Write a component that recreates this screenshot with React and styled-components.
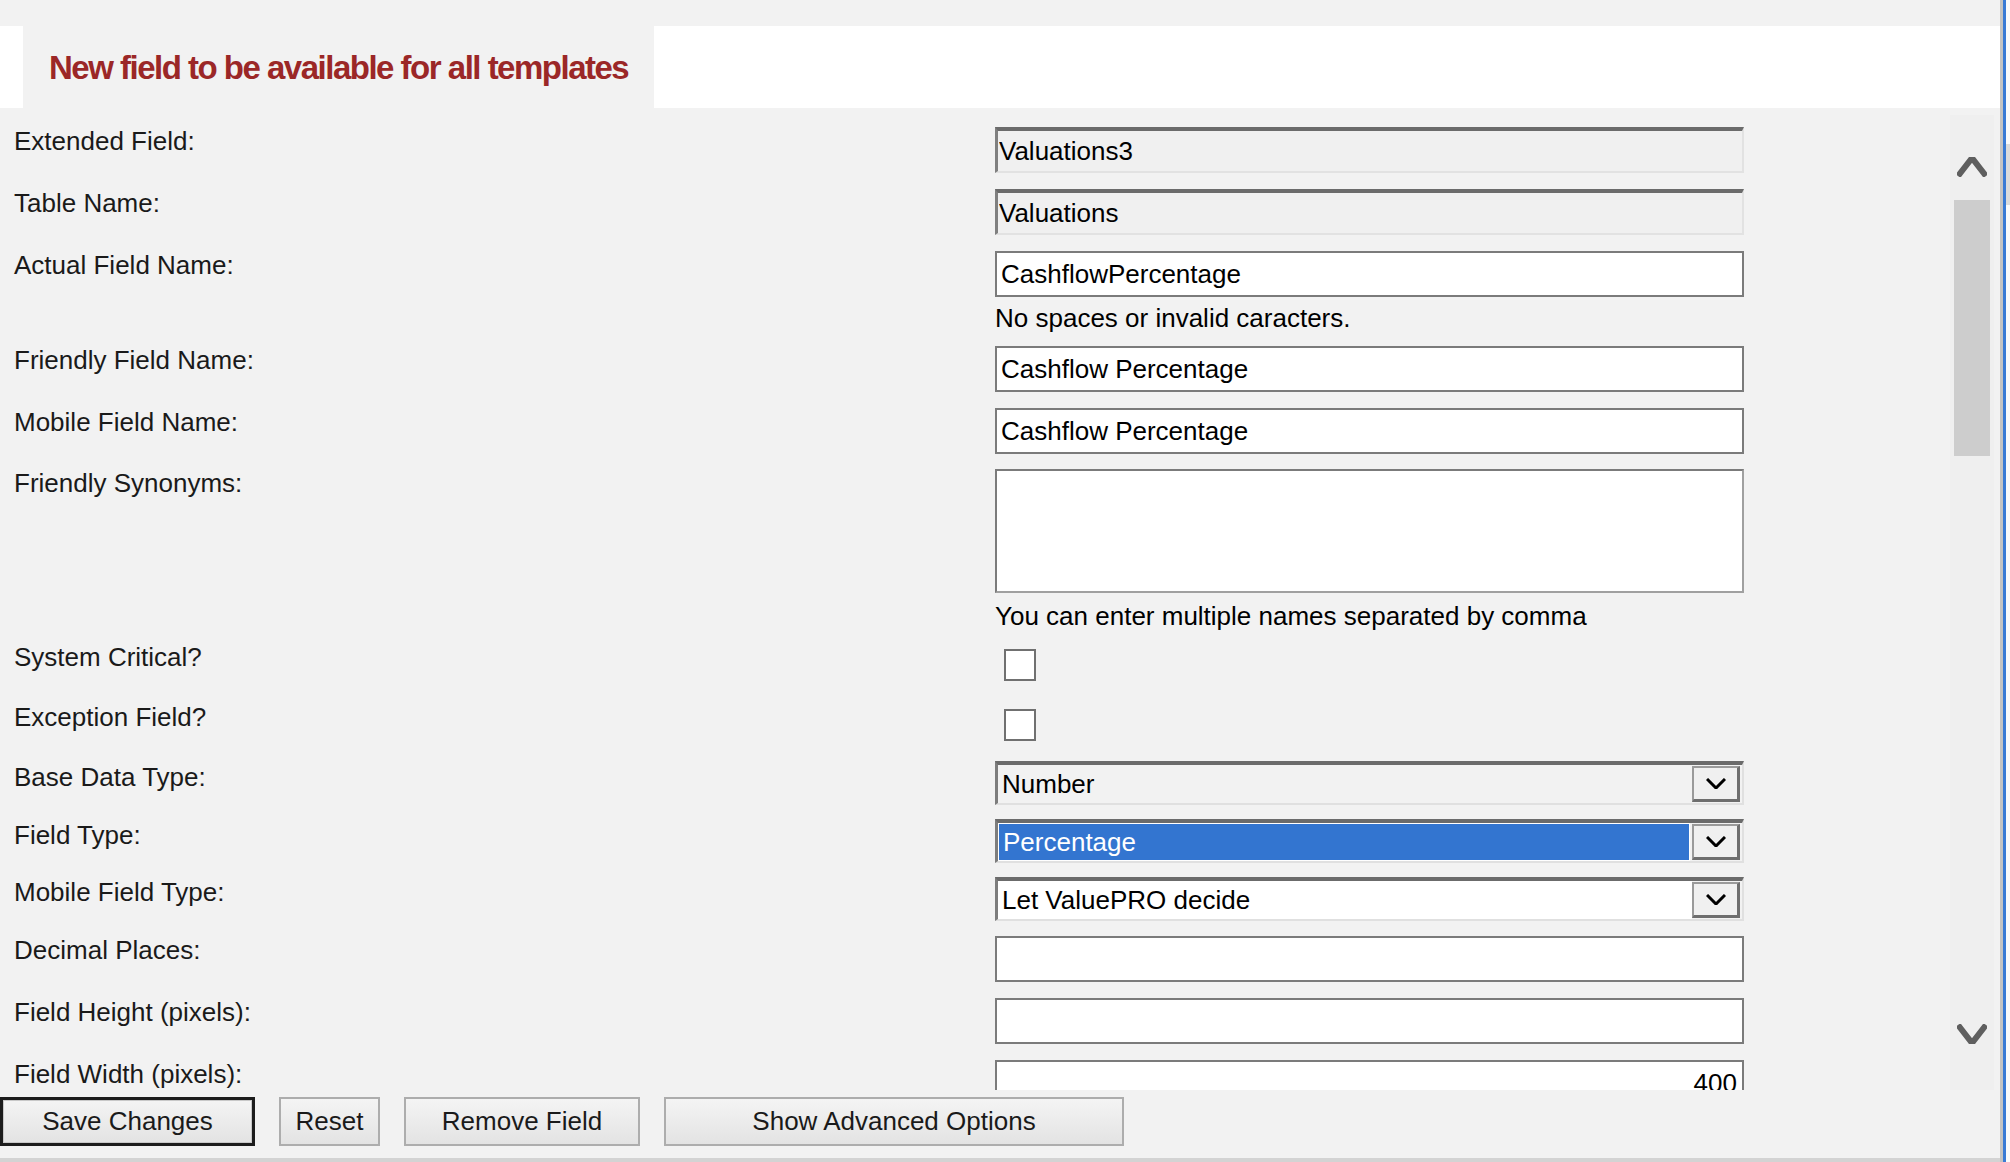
import React from "react";
import styled, { createGlobalStyle, css } from "styled-components";

const GlobalStyle = createGlobalStyle`
  html, body {
    margin: 0;
    padding: 0;
    background: #f2f2f2;
  }
  body {
    width: 2010px;
    height: 1162px;
    overflow: hidden;
    font-family: "Liberation Sans", Arial, sans-serif;
  }
`;

const Screen = styled.div`
  display: flex;
  width: 2010px;
  height: 1162px;
`;

const Window = styled.div`
  width: 2000px;
  display: flex;
  flex-direction: column;
  background: #f2f2f2;
`;

const EdgeGray = styled.div`
  width: 3px;
  background: #c4c4c4;
`;

const EdgeBlue = styled.div`
  width: 3px;
  background: #3a7bd5;
`;

const Behind = styled.div`
  flex: 1;
  background: #fbfbfb;
  padding-top: 144px;
`;

const BehindBlock = styled.div`
  height: 61px;
  background: #dcdcdc;
`;

const Header = styled.div`
  margin-top: 26px;
  height: 82px;
  background: #fff;
  display: flex;
  padding-left: 23px;
`;

const Tab = styled.div`
  width: 631px;
  box-sizing: border-box;
  padding-left: 26px;
  padding-top: 2px;
  background: #f2f2f2;
  display: flex;
  align-items: center;
  color: #9b2727;
  font-family: "Liberation Sans Narrow", "Liberation Sans", Arial, sans-serif;
  font-weight: bold;
  font-size: 33px;
  letter-spacing: -1.5px;
  white-space: nowrap;
`;

const Body = styled.div`
  display: flex;
  height: 982px;
`;

const Form = styled.div`
  flex: 1;
  overflow: hidden;
  padding-top: 19px;
  box-sizing: border-box;
`;

const Row = styled.div`
  display: grid;
  grid-template-columns: 981px 749px;
  padding-left: 14px;
  margin-bottom: ${(p) => p.$gap ?? 16}px;
`;

const Label = styled.div`
  font-size: 26px;
  line-height: 28px;
  color: #1a1a1a;
  padding-top: ${(p) => p.$pt || 0}px;
  white-space: nowrap;
`;

const Control = styled.div`
  display: flex;
  flex-direction: column;
`;

const Hint = styled.div`
  font-size: 26px;
  line-height: 30px;
  color: #000;
  padding-top: ${(p) => p.$pt || 6}px;
  margin-bottom: ${(p) => p.$mb || 0}px;
  white-space: nowrap;
`;

const fieldBase = css`
  box-sizing: border-box;
  width: 749px;
  margin: 0;
  padding: 0 5px;
  font: 26px "Liberation Sans", Arial, sans-serif;
  color: #000;
  outline: none;
`;

const Field = styled.input`
  ${fieldBase};
  height: 46px;
  padding-left: 4px;
  text-align: ${(p) => p.$align || "left"};
  background: #fff;
  border: 2px solid #7b7b7b;
  ${(p) =>
    p.$locked &&
    css`
      background: #f0f0f0;
      padding-left: 1px;
      border-top: 4px solid #6b6b6b;
      border-left: 3px solid #808080;
      border-right: 2px solid #e2e2e2;
      border-bottom: 2px solid #e2e2e2;
    `}
`;

const Area = styled.textarea`
  ${fieldBase};
  height: 124px;
  resize: none;
  background: #fff;
  border: 2px solid #a0a0a0;
  border-top-color: #7b7b7b;
  border-left-color: #7b7b7b;
`;

const CheckWrap = styled.div`
  height: 44px;
  box-sizing: border-box;
  padding: 6px 0 0 9px;
`;

const Check = styled.span`
  display: block;
  width: 32px;
  height: 32px;
  box-sizing: border-box;
  background: #fff;
  border: 2px solid #707070;
`;

const Select = styled.div`
  display: flex;
  width: 749px;
  height: 44px;
  box-sizing: border-box;
  background: #f2f2f2;
  border-top: 4px solid #6b6b6b;
  border-left: 3px solid #7d7d7d;
  border-right: 2px solid #e0e0e0;
  border-bottom: 2px solid #e0e0e0;
`;

const SelectValue = styled.div`
  flex: 1;
  display: flex;
  align-items: center;
  padding-left: 4px;
  font-size: 26px;
  color: ${(p) => (p.$selected ? "#fff" : "#000")};
  background: ${(p) => (p.$selected ? "#3375d0" : p.$bg || "transparent")};
  ${(p) =>
    p.$selected &&
    css`
      border: 1px solid #fff;
      margin-right: 2px;
    `}
  white-space: nowrap;
`;

const ArrowBox = styled.div`
  width: 48px;
  box-sizing: border-box;
  margin: 1px 2px 1px 0;
  display: flex;
  align-items: center;
  justify-content: center;
  background: #f0f0f0;
  border: 2px solid #9a9a9a;
  border-right: 3px solid #6e6e6e;
  border-bottom: 3px solid #6e6e6e;
`;

const ScrollBar = styled.div`
  width: 44px;
  margin: 7px 6px 0 0;
  background: #efefef;
  display: flex;
  flex-direction: column;
  align-items: center;
`;

const ScrollArrow = styled.div`
  height: ${(p) => p.$h}px;
  box-sizing: border-box;
  padding-top: ${(p) => p.$pt || 0}px;
  display: flex;
  justify-content: center;
`;

const Thumb = styled.div`
  width: 36px;
  height: 256px;
  background: #cdcdcd;
`;

const Spacer = styled.div`
  flex: 1;
`;

const ButtonBar = styled.div`
  display: flex;
  gap: 24px;
  height: 72px;
  box-sizing: border-box;
  padding-top: 7px;
  border-bottom: 4px solid #d3d3d3;
`;

const Button = styled.button`
  width: ${(p) => p.$w}px;
  height: 49px;
  box-sizing: border-box;
  margin: 0;
  padding: 0;
  font: 26px "Liberation Sans", Arial, sans-serif;
  color: #1a1a1a;
  background: linear-gradient(#f4f4f4, #e3e3e3);
  border: 2px solid #adadad;
  border-radius: 0;
  ${(p) =>
    p.$primary &&
    css`
      border: 3px solid #1c1c1c;
      box-shadow: inset 0 0 0 1px #c8c8c8;
    `}
`;

function Chevron({ up, color = "#000", w = 20, h = 11, sw = 3 }) {
  const pts = up ? `1,${h - 1} ${w / 2},1 ${w - 1},${h - 1}` : `1,1 ${w / 2},${h - 1} ${w - 1},1`;
  return (
    <svg width={w} height={h} viewBox={`0 0 ${w} ${h}`}>
      <polyline points={pts} fill="none" stroke={color} strokeWidth={sw} />
    </svg>
  );
}

function Dropdown({ value, selected, bg }) {
  return (
    <Select>
      <SelectValue $selected={selected} $bg={bg}>
        {value}
      </SelectValue>
      <ArrowBox>
        <Chevron />
      </ArrowBox>
    </Select>
  );
}

export default function App() {
  return (
    <>
      <GlobalStyle />
      <Screen>
        <Window>
          <Header>
            <Tab>New field to be available for all templates</Tab>
          </Header>
          <Body>
            <Form>
              <Row>
                <Label>Extended Field:</Label>
                <Field $locked readOnly value="Valuations3" />
              </Row>
              <Row>
                <Label>Table Name:</Label>
                <Field $locked readOnly value="Valuations" />
              </Row>
              <Row $gap={0}>
                <Label>Actual Field Name:</Label>
                <Control>
                  <Field readOnly value="CashflowPercentage" />
                  <Hint $mb={13}>No spaces or invalid caracters.</Hint>
                </Control>
              </Row>
              <Row>
                <Label>Friendly Field Name:</Label>
                <Field readOnly value="Cashflow Percentage" />
              </Row>
              <Row $gap={15}>
                <Label>Mobile Field Name:</Label>
                <Field readOnly value="Cashflow Percentage" />
              </Row>
              <Row $gap={0}>
                <Label>Friendly Synonyms:</Label>
                <Control>
                  <Area readOnly value="" />
                  <Hint $pt={8} $mb={12}>You can enter multiple names separated by comma</Hint>
                </Control>
              </Row>
              <Row>
                <Label>System Critical?</Label>
                <CheckWrap>
                  <Check />
                </CheckWrap>
              </Row>
              <Row $gap={14}>
                <Label>Exception Field?</Label>
                <CheckWrap>
                  <Check />
                </CheckWrap>
              </Row>
              <Row $gap={14}>
                <Label $pt={2}>Base Data Type:</Label>
                <Dropdown value="Number" />
              </Row>
              <Row $gap={14}>
                <Label $pt={2}>Field Type:</Label>
                <Dropdown value="Percentage" selected />
              </Row>
              <Row $gap={15}>
                <Label $pt={1}>Mobile Field Type:</Label>
                <Dropdown value="Let ValuePRO decide" bg="#fff" />
              </Row>
              <Row>
                <Label>Decimal Places:</Label>
                <Field readOnly value="" />
              </Row>
              <Row>
                <Label>Field Height (pixels):</Label>
                <Field readOnly value="" />
              </Row>
              <Row>
                <Label>Field Width (pixels):</Label>
                <Field readOnly value="400" $align="right" />
              </Row>
            </Form>
            <ScrollBar>
              <ScrollArrow $h={85} $pt={42}>
                <Chevron up color="#5f5f5f" w={30} h={20} sw={6} />
              </ScrollArrow>
              <Thumb />
              <Spacer />
              <ScrollArrow $h={66}>
                <Chevron color="#5f5f5f" w={30} h={20} sw={6} />
              </ScrollArrow>
            </ScrollBar>
          </Body>
          <ButtonBar>
            <Button $w={255} $primary>Save Changes</Button>
            <Button $w={101}>Reset</Button>
            <Button $w={236}>Remove Field</Button>
            <Button $w={460}>Show Advanced Options</Button>
          </ButtonBar>
        </Window>
        <EdgeGray />
        <EdgeBlue />
        <Behind>
          <BehindBlock />
        </Behind>
      </Screen>
    </>
  );
}
